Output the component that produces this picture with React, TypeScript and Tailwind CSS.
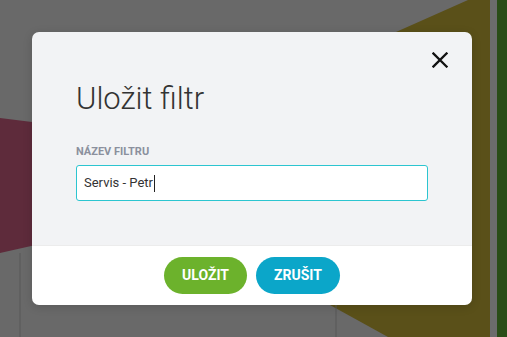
import React from 'react';

function Backdrop() {
  return (
    <svg className="absolute inset-0 h-full w-full" viewBox="0 0 507 337" preserveAspectRatio="none">
      <rect x="0" y="0" width="507" height="337" fill="#696969" />
      <polygon points="0,118 40,123 40,244 0,253" fill="#5e2b3b" />
      <line x1="20" y1="253" x2="20" y2="337" stroke="#585858" strokeWidth="1" />
      <polygon points="360,48 468,0 490,0 490,337 388,337 330,305 360,305" fill="#5a5019" />
      <line x1="336" y1="305" x2="336" y2="337" stroke="#585858" strokeWidth="1" />
      <rect x="490" y="0" width="7" height="337" fill="#6c6c6c" />
      <rect x="497" y="0" width="10" height="337" fill="#2a4d17" />
    </svg>
  );
}

export default function App() {
  return (
    <div className="relative h-[337px] w-[507px] overflow-hidden" style={{ fontFamily: 'Roboto, "Liberation Sans", sans-serif' }}>
      <Backdrop />
      <div className="absolute left-[32px] top-[32px] w-[440px] overflow-hidden rounded-[7px] shadow-[0_2px_10px_rgba(0,0,0,0.15)]">
        <div className="relative bg-[#f2f3f5] px-[44px] pb-[44px] pt-[49px]">
          <button className="absolute right-[23px] top-[19px] flex h-[18px] w-[18px] items-center justify-center">
            <svg width="16" height="16" viewBox="0 0 16 16">
              <path d="M1.5 1.5 L14.5 14.5 M14.5 1.5 L1.5 14.5" stroke="#111" strokeWidth="2.3" strokeLinecap="square" />
            </svg>
          </button>
          <h2 className="text-[31px] font-light leading-[36px] text-[#333]">Uložit filtr</h2>
          <div className="mt-[29px] text-[11px] font-bold uppercase leading-[12px] text-[#8b909d]">Název filtru</div>
          <div className="mt-[7px] flex h-[36px] items-center rounded-[3px] border border-[#2cc5d0] bg-white px-[7px] text-[13px] text-[#333]">
            <span>Servis - Petr</span>
            <span className="ml-[1px] h-[17px] w-px bg-[#222]" />
          </div>
        </div>
        <div className="flex h-[60px] items-center justify-center gap-[9px] border-t border-[#ececec] bg-white pb-px">
          <button className="h-[37px] w-[83px] rounded-full bg-[#6cb22c] text-[14px] font-bold text-white">ULOŽIT</button>
          <button className="h-[37px] w-[84px] rounded-full bg-[#0ba6c9] text-[14px] font-bold text-white">ZRUŠIT</button>
        </div>
      </div>
    </div>
  );
}
